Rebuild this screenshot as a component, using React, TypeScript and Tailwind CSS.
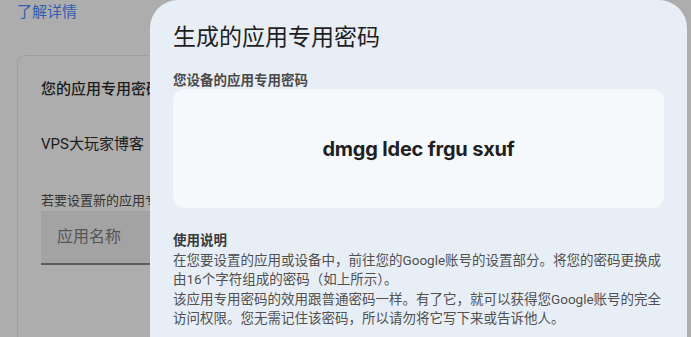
export default function App() {
  const font = "font-['Roboto','Noto_Sans_CJK_SC',sans-serif]";
  return (
    <div className={`relative h-[337px] w-full overflow-hidden bg-[#adadad] ${font}`}>
      <div className="flex flex-col pl-[17px] pt-[2px]">
        <a className="text-[15px] leading-[20px] text-[#2f5db0]">了解详情</a>
        <div className="mt-[33px] h-[320px] w-[400px] rounded-[8px] border border-[#9f9f9f] pl-[23px] pt-[22px]">
          <div className="text-[15px] font-medium leading-[22px] text-[#1c1c1c]">您的应用专用密码</div>
          <div className="mt-[33px] text-[15px] leading-[22px] text-[#1c1c1c]">VPS大玩家博客</div>
          <div className="mt-[38px] text-[13px] leading-[16px] text-[#333]">若要设置新的应用专用密码</div>
          <div className="mt-[2px] flex h-[54px] w-[300px] items-center border-b-2 border-[#5c5c5c] bg-[#a3a3a3] pl-[16px]">
            <span className="text-[16px] text-[#555]">应用名称</span>
          </div>
        </div>
      </div>

      <div className="absolute left-[150px] top-0 h-[380px] w-[537px] rounded-[28px] bg-[#e8eef5] px-[23px] pt-[22px]">
        <h2 className="text-[23px] font-normal leading-[32px] text-[#1f1f1f]">生成的应用专用密码</h2>
        <div className="mt-[17px] text-[13.5px] font-bold leading-[18px] text-[#4a4a4a]">您设备的应用专用密码</div>
        <div className="flex h-[119px] w-[491px] items-center justify-center rounded-[12px] bg-[#f6f9fb]">
          <span className="font-['Inter',sans-serif] text-[20px] font-bold tracking-[-0.2px] text-[#1f1f1f]">
            dmgg ldec frgu sxuf
          </span>
        </div>
        <div className="mt-[23px] w-[491px] text-[13.5px] leading-[19.5px] text-[#505050]">
          <div className="font-bold text-[#3a3a3a]">使用说明</div>
          <p>在您要设置的应用或设备中，前往您的Google账号的设置部分。将您的密码更换成由16个字符组成的密码（如上所示）。</p>
          <p>该应用专用密码的效用跟普通密码一样。有了它，就可以获得您Google账号的完全访问权限。您无需记住该密码，所以请勿将它写下来或告诉他人。</p>
        </div>
      </div>
    </div>
  );
}
